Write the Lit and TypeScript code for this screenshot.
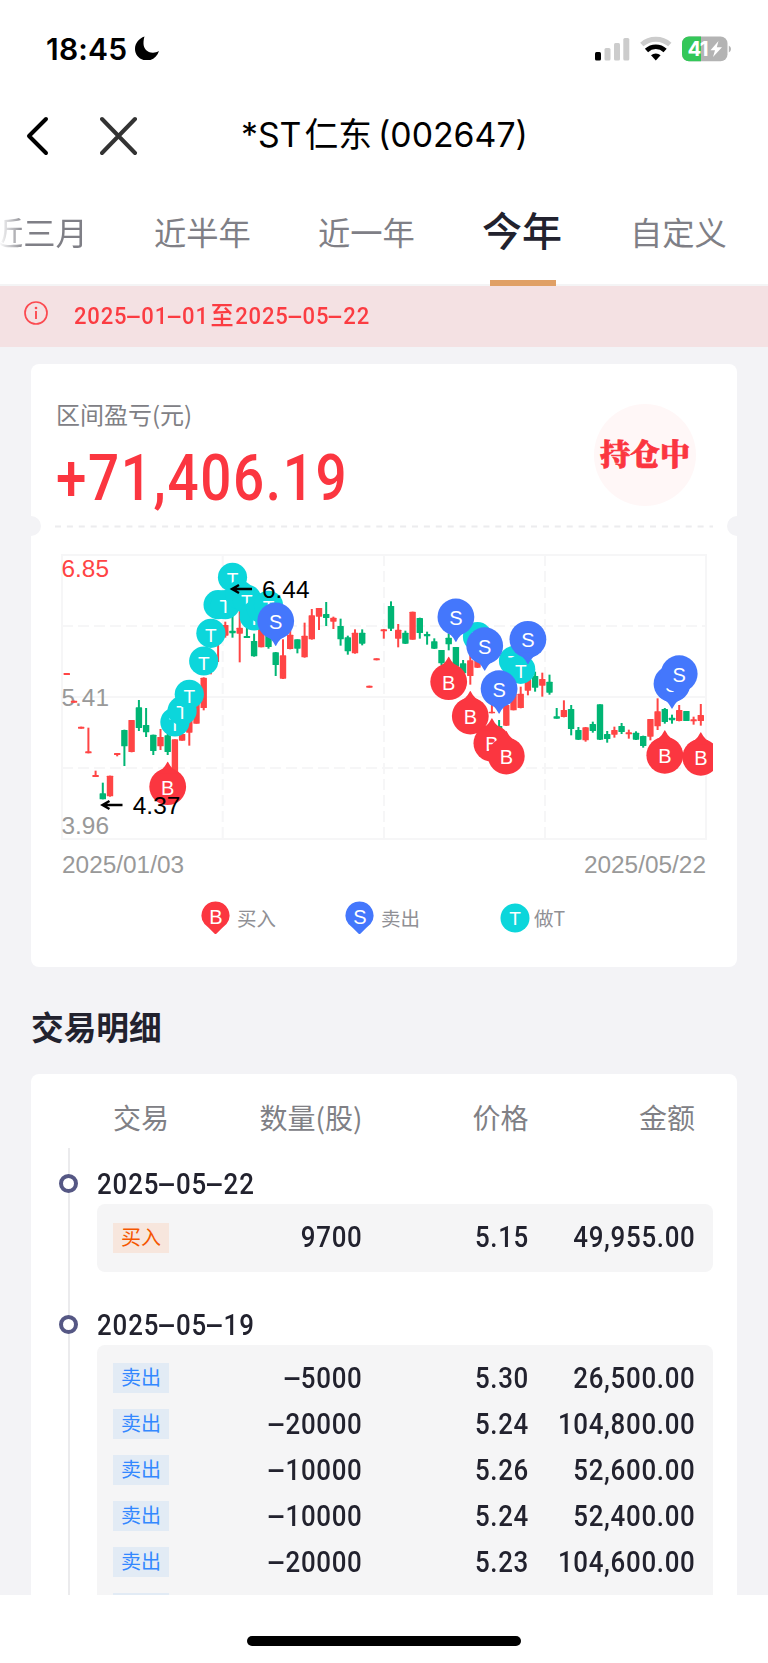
import { LitElement, html, svg, css } from "lit";
import { customElement } from "lit/decorators.js";

// Candle: [color, wickTop, bodyTop, bodyBottom, wickBottom], in thirds of a pixel.
type Candle = [string, number, number, number, number];
const candles: Candle[] = [
  ["r", 399, 399, 405, 405], ["r", 482, 482, 488, 488], ["r", 560, 560, 566, 566],
  ["r", 563, 634, 640, 640], ["r", 692, 705, 711, 711], ["g", 728, 760, 778, 778],
  ["r", 707, 707, 769, 770], ["r", 639, 639, 645, 649], ["g", 569, 570, 619, 678],
  ["r", 540, 540, 636, 637], ["g", 480, 502, 564, 573], ["g", 504, 555, 577, 591],
  ["g", 584, 584, 633, 645], ["r", 567, 591, 619, 630], ["g", 580, 586, 636, 645],
  ["r", 598, 598, 700, 700], ["r", 570, 582, 602, 602], ["r", 530, 540, 578, 617],
  ["r", 470, 480, 551, 551], ["r", 412, 413, 504, 511], ["r", 330, 340, 360, 403],
  ["r", 260, 270, 290, 366], ["r", 245, 255, 287, 293], ["g", 220, 272, 280, 293],
  ["r", 210, 263, 281, 367], ["g", 255, 288, 294, 294], ["g", 281, 303, 349, 350],
  ["r", 255, 255, 322, 322], ["g", 270, 270, 321, 326], ["g", 336, 337, 375, 408],
  ["r", 298, 346, 416, 417], ["r", 270, 284, 327, 328], ["g", 298, 298, 326, 340],
  ["r", 248, 287, 352, 353], ["r", 207, 226, 298, 299], ["r", 204, 204, 230, 270],
  ["g", 186, 222, 234, 258], ["r", 230, 233, 245, 267], ["g", 236, 258, 298, 317],
  ["g", 287, 292, 334, 344], ["r", 268, 278, 340, 341], ["g", 268, 278, 311, 316],
  ["r", 437, 437, 443, 443], ["r", 355, 355, 361, 361], ["r", 267, 268, 274, 296],
  ["g", 184, 198, 266, 273], ["r", 252, 269, 296, 322], ["g", 272, 278, 311, 312],
  ["r", 215, 215, 299, 299], ["g", 233, 234, 279, 296], ["g", 275, 282, 289, 314],
  ["g", 295, 304, 326, 327], ["g", 330, 330, 370, 376], ["g", 280, 293, 313, 331],
  ["g", 321, 321, 380, 385], ["g", 360, 370, 400, 404], ["r", 345, 361, 408, 434],
  ["r", 340, 345, 383, 384], ["r", 340, 345, 370, 372], ["r", 480, 515, 520, 520],
  ["g", 540, 558, 585, 590], ["r", 480, 495, 557, 558], ["r", 450, 460, 511, 511],
  ["r", 440, 461, 504, 505], ["r", 400, 405, 452, 466], ["g", 395, 408, 443, 455],
  ["r", 398, 417, 437, 470], ["g", 404, 425, 458, 464], ["g", 504, 529, 536, 536],
  ["r", 481, 510, 531, 532], ["g", 495, 507, 567, 586], ["g", 561, 570, 599, 600],
  ["r", 561, 562, 601, 605], ["g", 545, 552, 573, 578], ["g", 493, 493, 599, 600],
  ["g", 573, 582, 597, 608], ["r", 560, 570, 584, 593], ["g", 549, 558, 576, 582],
  ["r", 569, 577, 583, 596], ["g", 574, 578, 599, 600], ["g", 587, 588, 618, 623],
  ["r", 537, 537, 590, 601], ["r", 475, 514, 559, 570], ["g", 504, 507, 546, 551],
  ["g", 524, 533, 541, 551], ["r", 495, 510, 543, 544], ["g", 513, 513, 543, 543],
  ["r", 530, 538, 544, 554], ["r", 492, 525, 543, 557],
];

// Markers: [candle index, centre y in thirds of a pixel].
const swings: [number, number][] = [
  [15, 546], [16, 512], [17, 463], [19, 363], [20, 280], [21, 194], [22, 194],
  [23, 112], [24, 165], [25, 178], [26, 228], [27, 205], [28, 196],
  [57, 290], [62, 362], [63, 388],
];
const sells: [number, number][] = [[29, 243], [54, 231], [58, 317], [60, 446], [64, 298], [84, 431], [85, 401]];
const buys: [number, number][] = [[14, 740], [53, 425], [56, 528], [59, 610], [61, 648], [83, 646], [88, 652]];

const X0 = 35.8, PITCH = 7.205;
const cx = (i: number) => X0 + PITCH * i;
const cy = (v: number) => v / 3;
const round = (n: number) => Math.round(n * 10) / 10;

const groups = [
  { date: "2025-05-22", rows: [["买入", "9700", "5.15", "49,955.00"]] },
  {
    date: "2025-05-19",
    rows: [
      ["卖出", "-5000", "5.30", "26,500.00"],
      ["卖出", "-20000", "5.24", "104,800.00"],
      ["卖出", "-10000", "5.26", "52,600.00"],
      ["卖出", "-10000", "5.24", "52,400.00"],
      ["卖出", "-20000", "5.23", "104,600.00"],
      ["", "", "", ""],
    ],
  },
];

// Figures are set with a hyphen as wide as a digit.
const figures = (t: string) => t.split(/(-)/).map((p) => (p === "-" ? html`<span class="dash">-</span>` : p));

@customElement("app-root")
export class AppRoot extends LitElement {
  static styles = css`
    :host {
      display: flex; flex-direction: column; width: 768px; height: 1663px; overflow: hidden;
      background: #f3f3f6; color: #22222e; line-height: 1;
      font-family: "Noto Sans CJK SC", sans-serif;
    }
    * { box-sizing: border-box; }
    svg { display: block; flex: none; }
    .status { height: 97px; background: #fff; display: flex; align-items: flex-start; padding: 34px 37px 0 46px; }
    .time { font: 600 30px/30px Inter, sans-serif; color: #000; width: 88px; letter-spacing: .2px; }
    .spacer { flex: 1; }
    .nav { height: 77px; background: #fff; display: grid; grid-template-columns: 241px 287px 1fr; align-items: center; }
    .navicons { display: flex; gap: 51px; padding-left: 26px; }
    .title { font: 400 33.8px/48px Inter, "Noto Sans CJK SC", sans-serif; color: #000; white-space: nowrap; display: flex; padding-bottom: 2px; }
    .title .cn { margin: 0 6px 0 3px; }
    .tabs { height: 112px; background: #fff; display: flex; box-shadow: inset 0 -2px #f4f4f5; overflow: hidden; }
    .tab { flex: none; font-size: 32.3px; line-height: 114px; color: #7f7f86; white-space: nowrap; }
    .tab1 { margin-left: -9px; width: 163px; -webkit-mask-image: linear-gradient(90deg, transparent 8px, #000 34px); }
    .tab2 { width: 164px; }
    .tab3 { width: 164px; }
    .tab4 { width: 148px; font-size: 40px; font-weight: 500; color: #22222e; line-height: 111px; display: flex; flex-direction: column; }
    .tab4 .txt { height: 106px; }
    .tab4 .line { width: 66px; height: 6px; margin-left: 8px; background: #e0a066; }
    .notice { height: 61px; background: #f4e1e3; display: flex; align-items: flex-start; padding: 15px 0 0 24px; gap: 26px; color: #fb3c42; }
    .notice .range { font: 500 24.8px/30px Roboto, "Noto Sans CJK SC", sans-serif; letter-spacing: .9px; display: flex; transform: scaleX(.888); transform-origin: left; }
    .notice .cjk { margin: 0 1px 0 2px; font-size: 26px; }
    .dash { display: inline-block; width: .64em; text-align: center; transform: scaleX(2.2); }
    .scroll { height: 1248px; overflow: hidden; padding: 17px 31px 0; }
    .card { background: #fff; border-radius: 8px; }
    .summary { height: 603px; position: relative; overflow: hidden; }
    .head { height: 161px; display: flex; justify-content: space-between; padding: 38px 41px 0 25px; }
    .label { font-size: 24px; line-height: 24px; color: #808085; white-space: nowrap; }
    .amount { font: 500 64.5px/76px Roboto, sans-serif; color: #fb3640; letter-spacing: 1.9px; margin-top: 14px; white-space: nowrap; transform: scaleX(.85); transform-origin: left; }
    .badge { width: 102px; height: 102px; margin-top: 2px; border-radius: 50%; background: #fff7f7; display: flex; align-items: center; justify-content: center; padding-bottom: 7px;
      color: #fb3640; -webkit-text-stroke: .7px #fb3640; font: 900 30px/40px "Noto Serif CJK SC", "Noto Sans CJK SC", serif; white-space: nowrap; }
    .tear { height: 4px; display: block; }
    .notch { position: absolute; width: 20px; height: 20px; border-radius: 50%; background: #f3f3f6; top: 152px; }
    .notch.l { left: -10px; }
    .notch.r { right: -10px; }
    .chart { margin-top: 11px; }
    .chart text { font-family: "Liberation Sans", Arial, sans-serif; }
    .dates { display: flex; justify-content: space-between; padding: 0 31px; margin-top: 6px; font: 24.4px/28px "Liberation Sans", sans-serif; color: #999; }
    .legend { display: flex; align-items: center; height: 36px; margin-top: 21px; padding-left: 170px; color: #909095; font-size: 19.5px; }
    .legend .item { display: flex; align-items: center; gap: 7px; width: 144px; }
    .legend .item.t { margin-left: 11px; gap: 4px; }
    .legend text { font-family: "Liberation Sans", sans-serif; }
    h2 { margin: 0; font-size: 32.7px; line-height: 40px; padding: 39px 0 28px; font-weight: 700; }
    .detail { height: 700px; }
    .cols { display: grid; grid-template-columns: 100px 149.5px 166px 166.5px; margin-left: 82px; align-items: center; }
    .cols > * { text-align: right; }
    .cols > :first-child { text-align: left; justify-self: start; }
    .th { height: 74px; padding-top: 12px; font-size: 28px; color: #808085; }
    .line-wrap { margin-left: 37px; border-left: 2px solid #ebebed; padding: 16px 0 0 28px; height: 640px; }
    .group { margin-bottom: 32.5px; }
    .date { display: flex; align-items: center; height: 40px; gap: 19px; margin-left: -39px; }
    .fig { font: 500 29.4px/40px Roboto, sans-serif; letter-spacing: .8px; transform: scaleX(.88); transform-origin: right; position: relative; top: -1px; white-space: nowrap; }
    .date .fig { transform-origin: left; letter-spacing: 1px; top: 0; }
    .dot { width: 19px; height: 19px; border-radius: 50%; border: 4.5px solid #555784; background: #fff; margin-top: -1px; }
    .box { width: 616px; background: #f5f5f6; border-radius: 8px; padding: 11px 0; margin-left: -1px; }
    .row { height: 46px; margin-left: 16px; }
    .tag { font: 20px/28px "Noto Sans CJK SC", sans-serif; height: 30px; width: 56px; padding: 0 8px; color: #3388ff; background: #e2ebf5; margin-top: -1px; }
    .tag.buy { color: #f55600; background: #f7e6dd; }
    .home { height: 68px; background: #fff; display: flex; justify-content: center; padding-top: 41px; }
    .home div { width: 274px; height: 10px; border-radius: 5px; background: #000; }
  `;

  private pin(x: number, y: number, letter: string) {
    const up = letter === "B";
    return svg`<g transform="translate(${round(x)} ${round(y)})" fill=${up ? "#fb3640" : "#4477fc"}>
      <circle r="18.4"/>
      <path transform=${up ? "scale(1 -1)" : ""} d="M-13 13Q-4 17 -.8 24Q0 26 .8 24Q4 17 13 13Z"/>
      <text y="8" font-size="20" fill="#fff" text-anchor="middle">${letter}</text></g>`;
  }

  private chart() {
    return html`<svg class="chart" width="682" height="305" viewBox="0 0 682 305">
      <g fill="none" stroke="#f6f6f7" stroke-width="2">
        <path d="M31 15H675V299H31ZM31 157H675"/>
        <path stroke-dasharray="11 5" d="M31 86H675M31 228H675M191.700 15V299M353 15V299M514 15V299"/>
      </g>
      <g font-size="24.400" fill="#999">
        <text x="30.500" y="37" fill="#ff4444">6.85</text>
        <text x="30.500" y="166">5.41</text>
        <text x="30.500" y="294">3.96</text>
      </g>
      ${candles.map(([c, a, b, d, e], i) => svg`<g fill=${c === "r" ? "#ff4545" : "#00b574"}>
        <rect x=${round(cx(i) - 1)} y=${cy(a)} width="2" height=${(e - a) / 3}/>
        <rect x=${round(cx(i) - 3.2)} y=${cy(b)} width="6.400" height=${(d - b) / 3} rx=".6"/></g>`)}
      ${swings.map(([i, y]) => svg`<g transform="translate(${round(cx(i))} ${round(cy(y))})">
        <circle r="14.600" fill="#0cd6db"/><text y="8.600" font-size="19" fill="#fff" text-anchor="middle">T</text></g>`)}
      ${sells.map(([i, y]) => this.pin(cx(i), cy(y), "S"))}
      ${buys.map(([i, y]) => this.pin(cx(i), cy(y), "B"))}
      <g fill="none" stroke="#000" stroke-width="2.400">
        <path d="M221 49H201M208 45L201 49L208 53M91.500 265H71.500M78.500 261L71.500 265L78.500 269"/>
      </g>
      <g font-size="24.400" fill="#000"><text x="231" y="57.500">6.44</text><text x="101.800" y="274">4.37</text></g>
    </svg>`;
  }

  private legendPin(letter: string, fill: string) {
    return html`<svg width="29" height="34" viewBox="0 0 29 34">
      <path fill=${fill} d="M14.500 .5a14 14 0 0 1 11 22.600Q21 27 15.600 32.600Q14.500 33.600 13.400 32.600Q8 27 3.500 23.100A14 14 0 0 1 14.500 .5Z"/>
      <text x="15" y="22.500" font-size="20" fill="#fff" text-anchor="middle">${letter}</text></svg>`;
  }

  render() {
    return html`
      <div class="status">
        <span class="time">18:45</span>
        <svg width="26" height="26" viewBox="0 0 26 26"><path d="M10.500 2.500C5 4.500 1 9 1 15C1 21.500 6.500 26.500 13 26.500C18.500 26.500 23 23 25 17C23 18.300 21 18.700 19 18.700C13 18.700 9.500 14.500 9.500 9.500C9.500 6.500 9.800 4.500 10.500 2.500Z"/></svg>
        <span class="spacer"></span>
        <svg width="136" height="30" viewBox="0 0 136 30">
          <rect x="0" y="18" width="6" height="8.500" rx="1.500"/>
          <g fill="#ccc"><rect x="9.500" y="14" width="6" height="12.500" rx="1.500"/><rect x="19" y="9" width="6" height="17.500" rx="1.500"/><rect x="28.300" y="4" width="6" height="22.500" rx="1.500"/></g>
          <path d="M46.800 10.500A21 21 0 0 1 74.800 10.500" fill="none" stroke="#ccc" stroke-width="5"/>
          <path d="M51.500 16.500A13.500 13.500 0 0 1 70.100 16.500" fill="none" stroke="#000" stroke-width="4.600"/>
          <path d="M60.800 26.500L56 21.300A7 7 0 0 1 65.600 21.300Z"/>
          <rect x="87" y="2.500" width="45.500" height="24.800" rx="7" fill="#b3b3b3"/>
          <path d="M94 2.500H106V27.300H94A7 7 0 0 1 87 20.300V9.500A7 7 0 0 1 94 2.500Z" fill="#34c759"/>
          <path d="M133.800 11.500Q136 12.500 136 15T133.800 18.500Z" fill="#b3b3b3"/>
          <text x="92.500" y="22.400" font-family="Inter, sans-serif" font-weight="700" font-size="20.500" letter-spacing="-.8" fill="#fff">41</text>
          <path d="M123.500 7L115.500 16.300H120L118 23L127 13.200H121.800Z" fill="#fff"/>
        </svg>
      </div>
      <div class="nav">
        <div class="navicons">
          <svg width="23" height="40" viewBox="0 0 23 40"><path d="M20 3L3 20L20 37" fill="none" stroke="#000" stroke-width="4" stroke-linecap="round" stroke-linejoin="round"/></svg>
          <svg width="38" height="40" viewBox="0 0 38 40"><path d="M2 3L35 37M35 3L2 37" fill="none" stroke="#333" stroke-width="4" stroke-linecap="round"/></svg>
        </div>
        <div class="title"><span>*ST</span><span class="cn">仁东</span><span>(002647)</span></div>
      </div>
      <div class="tabs">
        <div class="tab tab1">近三月</div><div class="tab tab2">近半年</div><div class="tab tab3">近一年</div>
        <div class="tab tab4"><span class="txt">今年</span><span class="line"></span></div><div class="tab">自定义</div>
      </div>
      <div class="notice">
        <svg width="24" height="24" viewBox="0 0 24 24"><circle cx="12" cy="12" r="11" fill="none" stroke="#fb4a50" stroke-width="1.700"/><circle cx="12" cy="7" r="1.300" fill="#fb4a50"/><path d="M12 10V18" stroke="#fb4a50" stroke-width="1.900"/></svg>
        <span class="range">${figures("2025-01-01")}<span class="cjk">至</span>${figures("2025-05-22")}</span>
      </div>
      <div class="scroll">
        <div class="card summary">
          <div class="head">
            <div><div class="label">区间盈亏(元)</div><div class="amount">+71,406.19</div></div>
            <div class="badge">持仓中</div>
          </div>
          <svg class="tear" width="706" height="4"><path d="M24 1.500H682" stroke="#ececee" stroke-width="2.200" stroke-dasharray="6 5.900"/></svg>
          <span class="notch l"></span><span class="notch r"></span>
          ${this.chart()}
          <div class="dates"><span>2025/01/03</span><span>2025/05/22</span></div>
          <div class="legend">
            <div class="item">${this.legendPin("B", "#fb3640")}<span>买入</span></div>
            <div class="item">${this.legendPin("S", "#4477fc")}<span>卖出</span></div>
            <div class="item t"><svg width="30" height="30" viewBox="0 0 30 30"><circle cx="15" cy="15" r="14.500" fill="#0cd6db"/><text x="15" y="22" font-size="19" fill="#fff" text-anchor="middle">T</text></svg><span>做T</span></div>
          </div>
        </div>
        <h2>交易明细</h2>
        <div class="card detail">
          <div class="cols th"><span>交易</span><span>数量(股)</span><span>价格</span><span>金额</span></div>
          <div class="line-wrap">
            ${groups.map((g) => html`<div class="group">
              <div class="date"><span class="dot"></span><span class="fig">${figures(g.date)}</span></div>
              <div class="box">${g.rows.map((r) => html`<div class="cols row">
                <span class="tag ${r[0] === "买入" ? "buy" : ""}">${r[0]}</span><span class="fig">${figures(r[1])}</span><span class="fig">${r[2]}</span><span class="fig">${r[3]}</span>
              </div>`)}</div>
            </div>`)}
          </div>
        </div>
      </div>
      <div class="home"><div></div></div>
    `;
  }
}
